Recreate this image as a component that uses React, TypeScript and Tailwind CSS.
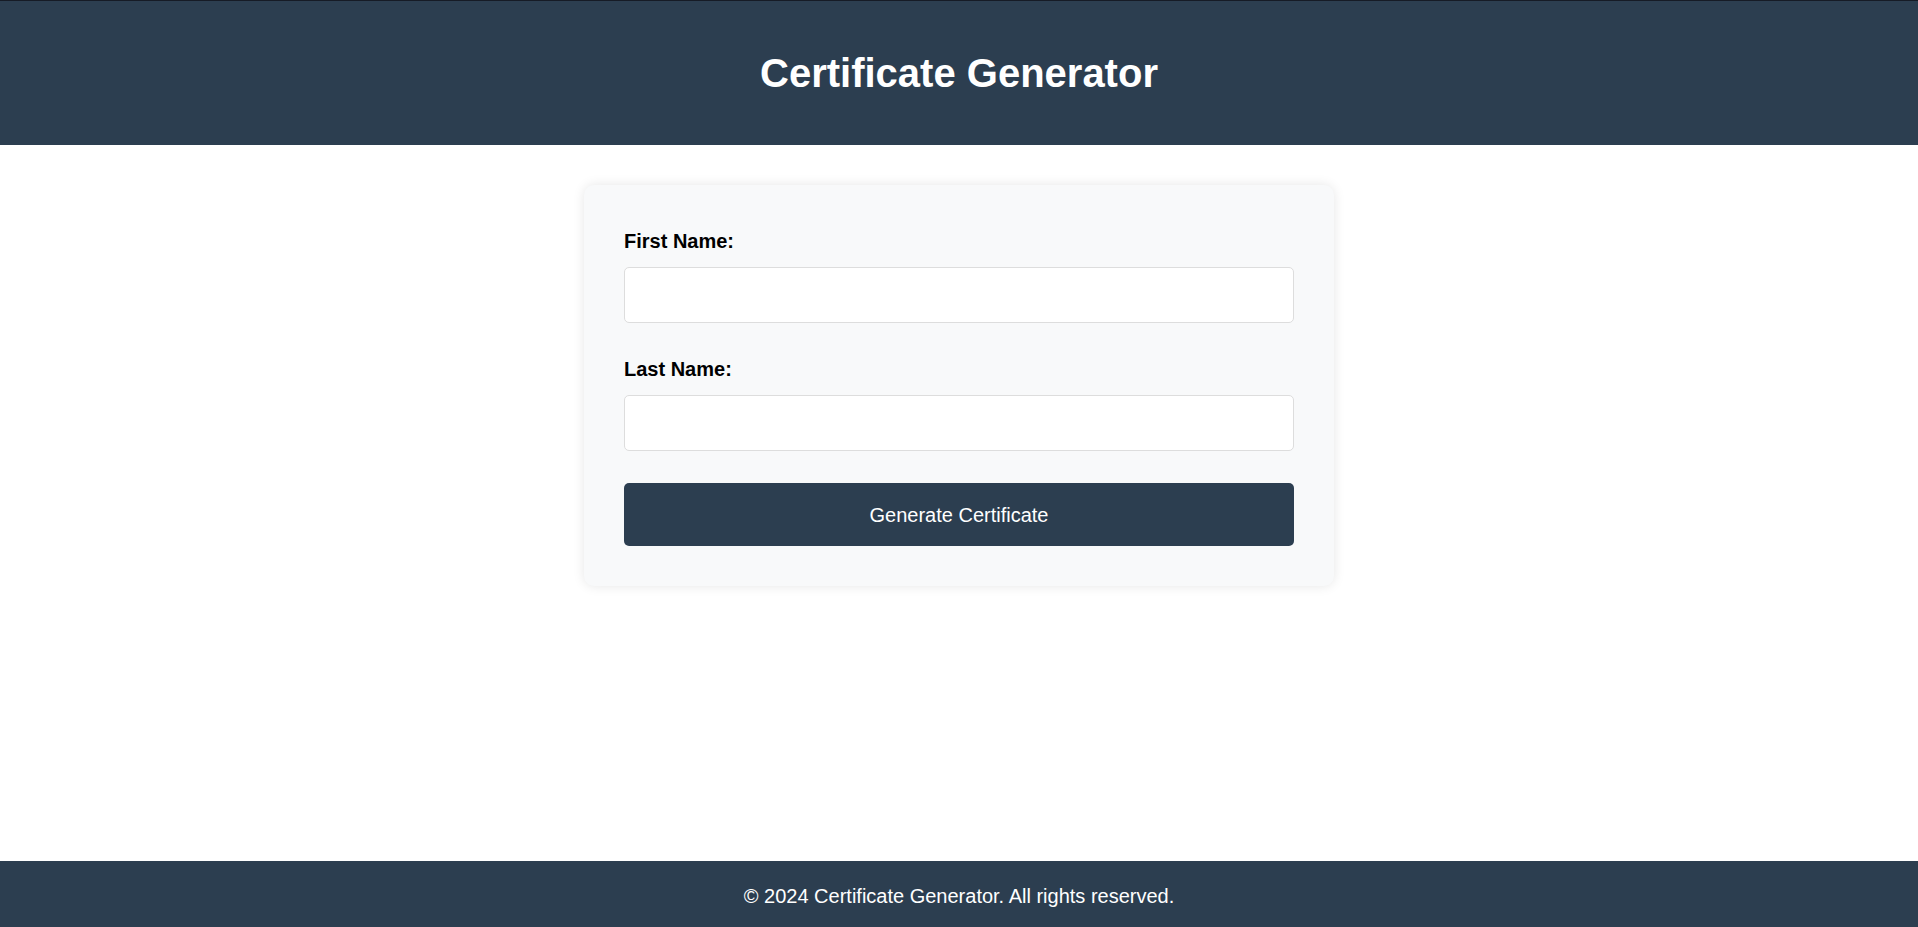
import React from "react";

export default function App() {
  return (
    <div
      className="min-h-screen flex flex-col bg-white"
      style={{ fontFamily: '"Liberation Sans", Arial, sans-serif' }}
    >
      <header className="h-[145px] bg-[#2c3e50] border-t border-[#161b26] flex items-center justify-center">
        <h1 className="text-[40px] font-bold text-white leading-[46px]">Certificate Generator</h1>
      </header>

      <main className="flex-1 flex justify-center pt-[40px]">
        <div className="w-[750px] h-fit bg-[#f8f9fa] rounded-[10px] shadow-[0_0_12px_rgba(0,0,0,0.1)] p-[40px]">
          <div className="mb-[30px]">
            <label className="block text-[20px] font-bold text-black leading-[32px] mb-[10px]">First Name:</label>
            <input
              type="text"
              className="block w-full h-[56px] bg-white border border-[#dddddd] rounded-[5px] px-[15px] text-[20px] outline-none"
            />
          </div>
          <div className="mb-[32px]">
            <label className="block text-[20px] font-bold text-black leading-[32px] mb-[10px]">Last Name:</label>
            <input
              type="text"
              className="block w-full h-[56px] bg-white border border-[#dddddd] rounded-[5px] px-[15px] text-[20px] outline-none"
            />
          </div>
          <button className="block w-full h-[63px] bg-[#2c3e50] text-white text-[20px] rounded-[5px]">
            Generate Certificate
          </button>
        </div>
      </main>

      <footer className="h-[66px] bg-[#2c3e50] flex items-center justify-center pt-[4px]">
        <p className="text-white text-[20px] leading-[23px]">© 2024 Certificate Generator. All rights reserved.</p>
      </footer>
    </div>
  );
}
